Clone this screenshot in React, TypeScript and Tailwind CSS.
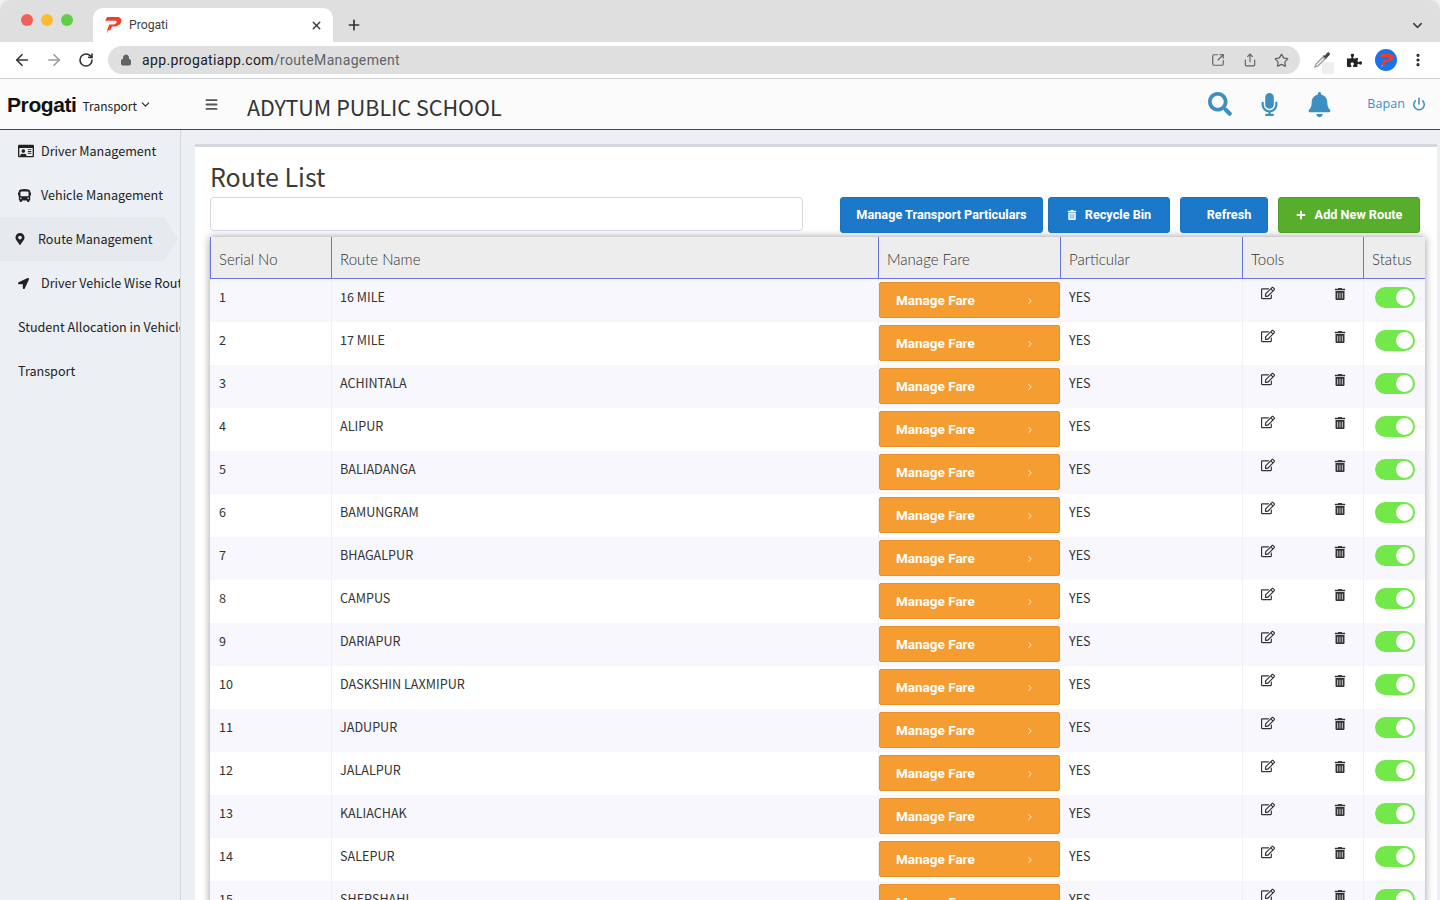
import React from 'react';
import { ArrowLeft, ArrowRight, RotateCw, Lock, X, Plus, ChevronDown, ChevronRight, SquareArrowOutUpRight, Share, Star, EllipsisVertical, Menu, Power } from 'lucide-react';
import { FaRegIdCard, FaBus, FaMapMarkerAlt, FaLocationArrow, FaRegEdit, FaTrashAlt, FaSearch, FaMicrophone, FaBell, FaPuzzlePiece, FaPlus } from 'react-icons/fa';

const ROUTES = [
  '16 MILE', '17 MILE', 'ACHINTALA', 'ALIPUR', 'BALIADANGA', 'BAMUNGRAM', 'BHAGALPUR', 'CAMPUS',
  'DARIAPUR', 'DASKSHIN LAXMIPUR', 'JADUPUR', 'JALALPUR', 'KALIACHAK', 'SALEPUR', 'SHERSHAHI',
];

const Logo = ({ size = 18, className = '' }: { size?: number; className?: string }) => (
  <svg width={size} height={size} viewBox="0 0 17 17" className={className}>
    <path fillRule="evenodd" d="M3 1 H12 C15.500 1 17 3 16.300 5.500 C15.500 8.500 12.500 10 9 10 H7.500 L6 13.500 H2.800 L5 8 H9 C10.500 8 11.800 7.200 12 6 C12.200 5 11.500 4.500 10.300 4.500 H1 Z" fill="#ee3f2c" />
    <path d="M2.800 13.500 H4.500 L3 16.500 Z" fill="#f3a03a" />
  </svg>
);

const NavItem = ({ icon, label, active = false, labelClass = 'pl-[18px]' }: { icon?: React.ReactNode; label: string; active?: boolean; labelClass?: string }) => (
  <div className={`relative flex h-11 items-center whitespace-nowrap text-[12.600px] text-[#222] ${labelClass} ${active ? 'w-[164px] bg-[#e6e9ed]' : ''}`}>
    {icon}
    <span>{label}</span>
    {active && <span className="absolute left-full top-0 h-0 w-0 border-y-[22px] border-l-[14px] border-y-transparent border-l-[#e6e9ed]" />}
  </div>
);

const Toggle = () => (
  <div className="flex h-[21px] w-10 items-center justify-end rounded-full bg-[#72e84a] pr-[2px]">
    <div className="h-[17px] w-[17px] rounded-full bg-white" />
  </div>
);

const ActionButton = ({ children, className }: { children: React.ReactNode; className: string }) => (
  <button className={`flex h-9 items-center justify-center rounded-[3px] border font-['Roboto',sans-serif] text-[12.700px] font-bold text-white ${className}`}>
    {children}
  </button>
);

export default function App() {
  return (
    <div className="flex h-screen flex-col overflow-hidden bg-[#eceff4] font-['Noto_Sans_CJK_SC','Noto_Sans',sans-serif] text-[#333]">
      {/* Browser tabs */}
      <div className="flex h-[42px] shrink-0 items-end rounded-t-[10px] bg-[#dfdfe0]">
        <div className="flex h-[42px] w-[93px] items-center gap-[8px] pb-[2px] pl-[21px]">
          <span className="h-3 w-3 rounded-full bg-[#f35f58]" />
          <span className="h-3 w-3 rounded-full bg-[#fbbd2e]" />
          <span className="h-3 w-3 rounded-full bg-[#5fcf45]" />
        </div>
        <div className="flex h-[34px] w-[240px] items-center rounded-t-[10px] bg-white pl-[11px] pr-[10px]">
          <Logo />
          <span className="ml-[7px] font-['Roboto',sans-serif] text-[12.200px] text-[#3c4043]">Progati</span>
          <X size={13} strokeWidth={2.5} className="ml-auto text-[#333]" />
        </div>
        <div className="ml-[13px] flex h-[34px] items-center">
          <Plus size={16} strokeWidth={2.5} className="text-[#333]" />
        </div>
        <div className="ml-auto flex h-[34px] items-center pr-[15px]">
          <ChevronDown size={15} strokeWidth={2.5} className="text-[#444]" />
        </div>
      </div>

      {/* Browser toolbar */}
      <div className="flex h-[37px] shrink-0 items-center border-b border-[#cfd0d2] bg-white">
        <ArrowLeft size={18} strokeWidth={2.2} className="ml-[13px] text-[#333]" />
        <ArrowRight size={18} strokeWidth={2.2} className="ml-[14px] text-[#9a9a9a]" />
        <RotateCw size={16} strokeWidth={2.4} className="ml-[15px] text-[#333]" />
        <div className="ml-[14px] flex h-7 w-[1192px] items-center rounded-full bg-[#dfdfe0] pl-[12px] pr-[11px]">
          <Lock size={12} fill="#5f6368" className="text-[#5f6368]" />
          <span className="ml-[10px] font-['Roboto',sans-serif] text-[14px] tracking-[0.35px] text-[#202124]">app.progatiapp.com<span className="text-[#5f6368]">/routeManagement</span></span>
          <SquareArrowOutUpRight size={14} className="ml-auto text-[#5f6368]" />
          <Share size={14} className="ml-[18px] text-[#5f6368]" />
          <Star size={15} className="ml-[17px] text-[#5f6368]" />
        </div>
        {/* colour picker extension */}
        <div className="relative ml-[13px] h-[18px] w-[18px]">
          <svg width="18" height="18" viewBox="0 0 18 18">
            <path d="M2 16 L3 13 L10 6 L12 8 L5 15 Z" fill="#f4f4f4" stroke="#9a9a9a" strokeWidth="1.300" />
            <path d="M10.500 4.500 L13.500 7.500 M12 6 L14.500 2.500 C15.500 1.500 16.800 2.800 15.800 3.800 L12.500 7" fill="#444" stroke="#444" strokeWidth="1.600" />
          </svg>
          <span className="absolute -bottom-[5px] -right-[3px] h-3 w-3 rounded-[2px] bg-[#eceff1]" />
        </div>
        <FaPuzzlePiece size={15} className="ml-[16px] text-[#222]" />
        <div className="ml-[13px] flex h-[22px] w-[22px] items-center justify-center rounded-full bg-[#1a73e8]">
          <Logo size={15} />
        </div>
        <EllipsisVertical size={16} strokeWidth={2.8} className="ml-[13px] text-[#222]" />
      </div>

      {/* App header */}
      <header className="flex h-[51px] shrink-0 items-center border-b border-[#444] bg-[#fbfbfb]">
        <div className="flex w-[204px] items-center pl-[7px]">
          <span className="mt-[1px] font-['Liberation_Sans',sans-serif] text-[21px] font-bold tracking-[-0.4px] text-[#111]">Progati</span>
          <span className="ml-[6px] mt-[4px] text-[12px] text-[#222]">Transport</span>
          <ChevronDown size={13} strokeWidth={2} className="ml-[2px] mt-[1px] text-[#222]" />
        </div>
        <Menu size={15} strokeWidth={3} className="text-[#555]" />
        <h1 className="ml-[28px] mt-[5px] text-[21.500px] font-normal leading-none text-[#333]">ADYTUM PUBLIC SCHOOL</h1>
        <div className="ml-auto flex items-center pr-[14px] text-[#3d8fc0]">
          <FaSearch size={24} />
          <FaMicrophone size={23} className="ml-[26px]" />
          <FaBell size={25} className="ml-[26px]" />
          <span className="ml-[35px] font-['Open_Sans',sans-serif] text-[12.500px] tracking-[0.1px]">Bapan</span>
          <Power size={14} strokeWidth={2.6} className="ml-[7px]" />
        </div>
      </header>

      <div className="flex min-h-0 flex-1">
        {/* Sidebar */}
        <aside className="w-[181px] shrink-0 overflow-hidden border-r border-r-[#d5d8dc] bg-[#eceff4]">
          <nav className="-mt-px">
            <NavItem icon={<FaRegIdCard size={16} className="mr-[7px] shrink-0" />} label="Driver Management" />
            <NavItem icon={<FaBus size={13} className="mr-[10px] shrink-0" />} label="Vehicle Management" />
            <NavItem active labelClass="pl-[14px]" icon={<FaMapMarkerAlt size={12} className="mr-[12px] shrink-0" />} label="Route Management" />
            <NavItem icon={<FaLocationArrow size={11} className="mr-[12px] shrink-0" />} label="Driver Vehicle Wise Route" />
            <NavItem label="Student Allocation in Vehicle" />
            <NavItem label="Transport" />
          </nav>
        </aside>

        {/* Main */}
        <main className="min-w-0 flex-1 pl-[14px] pr-[3px] pt-[14px]">
          <div className="h-[800px] border-t-[3px] border-t-[#d4d8de] bg-white px-[15px]">
            <h2 className="mt-[11px] text-[25px] font-normal leading-[36px] text-[#3b3b3b]">Route List</h2>
            <div className="mt-[3px] flex h-[36px] items-start">
              <input aria-label="Search" className="h-[34px] w-[593px] rounded-[4px] border border-[#d4d7e3] bg-white" />
              <ActionButton className="ml-[37px] w-[203px] border-[#1a73bf] bg-[#1c78c9]">Manage Transport Particulars</ActionButton>
              <ActionButton className="ml-[5px] w-[122px] border-[#1a73bf] bg-[#1c78c9]"><FaTrashAlt size={10} className="mr-[8px]" />Recycle Bin</ActionButton>
              <ActionButton className="ml-[10px] w-[88px] border-[#1a73bf] bg-[#1c78c9] pl-[10px]">Refresh</ActionButton>
              <ActionButton className="ml-[10px] w-[142px] border-[#4a9d25] bg-[#56ae2c]"><FaPlus size={10} className="mr-[9px]" />Add New Route</ActionButton>
            </div>

            {/* Table */}
            <div className="mt-[4px] w-[1215px] shadow-[0_0_8px_rgba(0,0,0,0.4)]">
              <table className="w-full table-fixed border-separate border-spacing-0 text-[12.600px]">
                <colgroup>
                  <col className="w-[122px]" />
                  <col className="w-[547px]" />
                  <col className="w-[182px]" />
                  <col className="w-[182px]" />
                  <col className="w-[121px]" />
                  <col className="w-[61px]" />
                </colgroup>
                <thead>
                  <tr className="h-[42px] bg-[#ededed] font-['Lato',sans-serif] text-[15px] text-[#333]">
                    {['Serial No', 'Route Name', 'Manage Fare', 'Particular', 'Tools', 'Status'].map((h, i) => (
                      <th key={h} className={`border-b border-b-[#6874e0] pl-[8px] pt-[3px] text-left font-light ${i < 5 ? 'border-r border-r-[#6874e0]' : ''} ${i === 0 ? 'border-l border-l-[#6874e0]' : ''}`}>{h}</th>
                    ))}
                  </tr>
                </thead>
                <tbody>
                  {ROUTES.map((name, i) => (
                    <tr key={name} className={`h-[43px] ${i % 2 === 0 ? 'bg-[#f8f7fe]' : 'bg-white'}`}>
                      <td className="border-r border-r-[#f1f1f5] pb-[7px] pl-[9px] align-middle">{i + 1}</td>
                      <td className="border-r border-r-[#f1f1f5] pb-[7px] pl-[8px] align-middle">{name}</td>
                      <td className="pb-[2px] align-middle">
                        <button className="flex h-9 w-[181px] items-center justify-between rounded-[2px] border border-[#e8912a] bg-[#f59d31] pl-4 pr-6 pt-[2px] font-['Roboto',sans-serif] text-[13.500px] font-bold text-white">
                          Manage Fare
                          <ChevronRight size={10} />
                        </button>
                      </td>
                      <td className="border-r border-r-[#f1f1f5] pb-[7px] pl-2 align-middle">YES</td>
                      <td className="border-r border-r-[#f1f1f5] pb-[15px] align-middle text-[#333]">
                        <div className="flex items-center pl-[18px]">
                          <FaRegEdit size={14} />
                          <FaTrashAlt size={12} className="ml-[59px] mt-[2px]" />
                        </div>
                      </td>
                      <td className="pb-[6px] pl-[11px] align-middle"><Toggle /></td>
                    </tr>
                  ))}
                </tbody>
              </table>
            </div>
          </div>
        </main>
      </div>
    </div>
  );
}
